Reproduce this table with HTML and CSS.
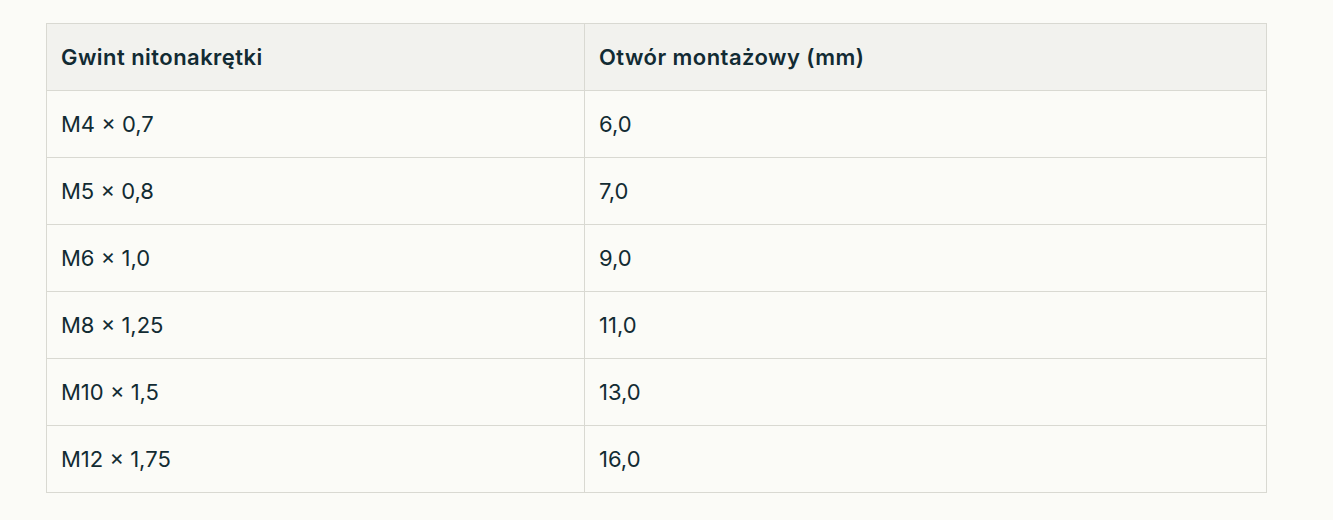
FILE: index.html
```html
<!DOCTYPE html>
<html lang="pl">
<head>
<meta charset="utf-8">
<link rel="stylesheet" href="styles.css">
</head>
<body>
<div class="wrap">
  <table class="spec">
    <thead>
      <tr><th class="c1">Gwint nitonakrętki</th><th>Otwór montażowy (mm)</th></tr>
    </thead>
    <tbody>
      <tr><td>M4 × 0,7</td><td>6,0</td></tr>
      <tr><td>M5 × 0,8</td><td>7,0</td></tr>
      <tr><td>M6 × 1,0</td><td>9,0</td></tr>
      <tr><td>M8 × 1,25</td><td>11,0</td></tr>
      <tr><td>M10 × 1,5</td><td>13,0</td></tr>
      <tr><td>M12 × 1,75</td><td>16,0</td></tr>
    </tbody>
  </table>
</div>
</body>
</html>
```
FILE: styles.css
```css
html, body { margin: 0; padding: 0; background: #fbfbf7; }
body { font-family: Inter, "Noto Sans", sans-serif; color: #122b33; }
.wrap { padding: 23px 66px 0 46px; }
.spec { width: 100%; border-collapse: collapse; border: 1px solid #d9d9d2; table-layout: fixed; }
.spec th, .spec td { height: 67px; padding: 0 14px; text-align: left; border: 1px solid #d9d9d2; font-size: 22px; vertical-align: middle; box-sizing: border-box; }
.spec th { background: #f2f2ee; font-weight: 600; letter-spacing: 0.45px; padding-bottom: 1px; }
.spec td { font-weight: 400; padding-bottom: 1px; }
.spec .c1 { width: 538px; }
```
